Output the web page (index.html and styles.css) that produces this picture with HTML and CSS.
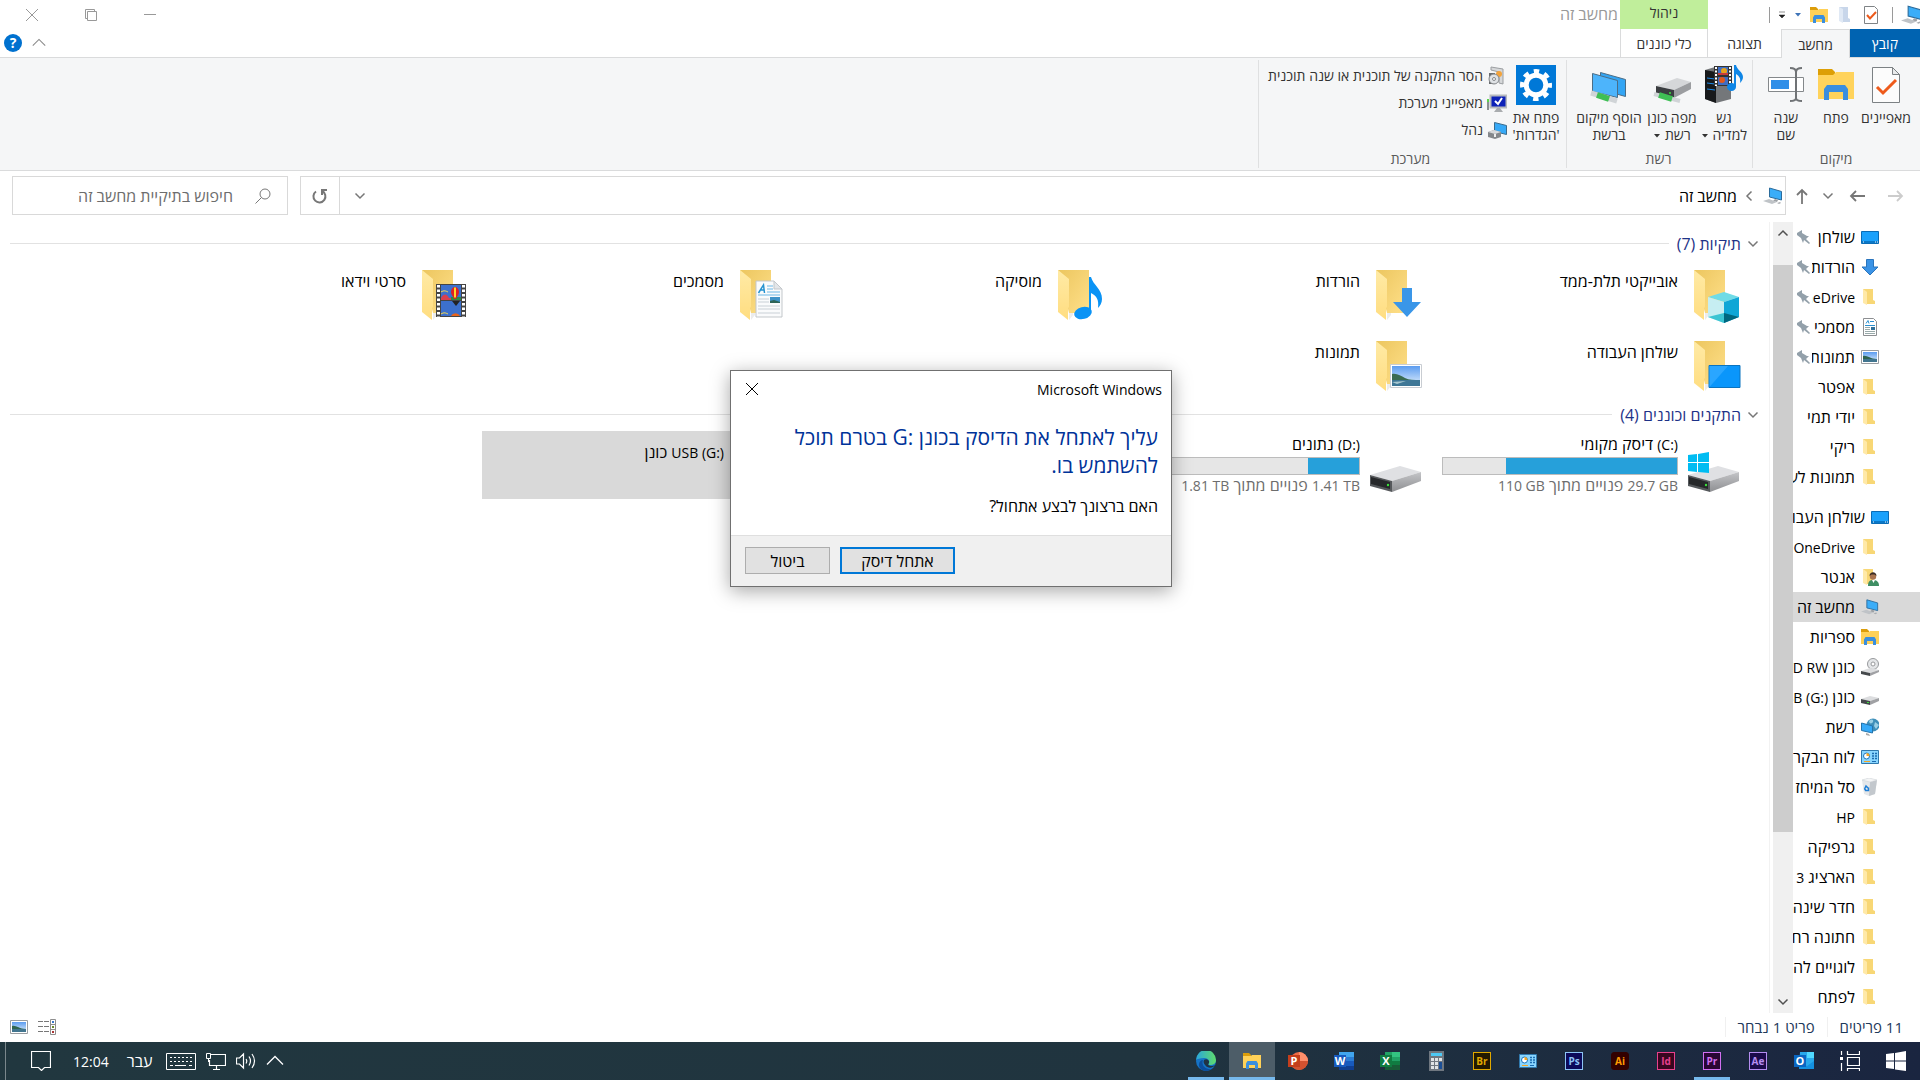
FILE: index.html
```html
<!DOCTYPE html>
<html lang="he" dir="rtl">
<head>
    <meta charset="UTF-8">
    <meta name="viewport" content="width=device-width, initial-scale=1.0">
    <title>מחשב זה</title>
    <link rel="stylesheet" href="styles.css">
</head>
<body>
    <svg class="sprite" aria-hidden="true">
        <defs>
            <linearGradient id="gBack" x1="0" y1="0" x2="1" y2="1"><stop offset="0" stop-color="#ecc65f"/><stop offset="1" stop-color="#ffe08a"/></linearGradient>
            <linearGradient id="gFlap" x1="0" y1="0" x2="0" y2="1"><stop offset="0" stop-color="#ffeaa5"/><stop offset="1" stop-color="#ffdd80"/></linearGradient>
            <linearGradient id="gSide" x1="0" y1="0" x2="0" y2="1"><stop offset="0" stop-color="#c4c5c8"/><stop offset="1" stop-color="#8e8f92"/></linearGradient>
            <linearGradient id="gSky" x1="0" y1="0" x2="0" y2="1"><stop offset="0" stop-color="#5b9cf0"/><stop offset="1" stop-color="#e4f1fc"/></linearGradient>
            <linearGradient id="gEdge" x1="0" y1="0" x2="1" y2="0"><stop offset="0" stop-color="#2aa6dd"/><stop offset="1" stop-color="#5fdc6b"/></linearGradient>
        </defs>
        <symbol id="big-folder" viewBox="-6 -1 56 56">
            <path d="M0 2h31v43H11z" fill="url(#gBack)"/>
            <path d="M11 45l4 0 0 2-4 5z" fill="#ececec"/>
            <path d="M0 2l11 9v28l-1 1v12L0 44z" fill="url(#gFlap)"/>
        </symbol>
        <symbol id="ov-cube" viewBox="-6 -1 56 56">
            <path d="M14 29l16-5 15 5-15 5z" fill="#6fdbe6"/>
            <path d="M14 29l16 5v21l-16-6z" fill="#c6eef2"/>
            <path d="M30 34l15-5v20l-15 6z" fill="#0fa6d6"/>
            <path d="M14 49l16-4v10z" fill="#3cc5d3"/>
            <path d="M30 45l15 4-15 6z" fill="#00677f"/>
        </symbol>
        <symbol id="ov-arrow" viewBox="-6 -1 56 56"><path d="M26 20h10v14h9L31 49 17 34h9z" fill="#3a96e8"/></symbol>
        <symbol id="ov-note" viewBox="-6 -1 56 56">
            <path d="M31 9h2c2 8 11 12 11 22 0 4-2 7-4 9 1-8-1-12-7-15v20h-2z" fill="#0a93f5"/>
            <ellipse cx="25" cy="45" rx="9" ry="6" transform="rotate(-15 25 45)" fill="#0a93f5"/>
        </symbol>
        <symbol id="ov-doc" viewBox="-6 -1 56 56">
            <path d="M16 13h18l8 8v28H16z" fill="#fafbfc" stroke="#c3c7cb"/>
            <path d="M34 13v8h8z" fill="#e3e6e9" stroke="#c3c7cb"/>
            <path d="M18.500 25l5-8 1 8M20.500 22h4" fill="none" stroke="#2492d0" stroke-width="1.500"/>
            <path d="M27 18h6M27 21h6M27 24h13M18 27h22" stroke="#6cb8e6"/>
            <path d="M18 31h11M18 34h11M18 38h22M18 41h22M18 45h22" stroke="#c9d0d6"/>
            <path d="M30 29h10v6H30z" fill="#3f93c8"/>
            <path d="M30 33l4-1 6 2v1H30z" fill="#2d6457"/>
        </symbol>
        <symbol id="ov-video" viewBox="-6 -1 56 56">
            <path d="M14 16h30v33H14z" fill="#444"/>
            <path d="M16.500 17v32M41.500 17v32" stroke="#fff" stroke-width="3" stroke-dasharray="2.500 2"/>
            <path d="M19 17h20v15H19zM19 33h20v15H19z" fill="#3c70cc"/>
            <path d="M19 30c3-5 6-4 8 0h12v2H19z" fill="#d8404f"/>
            <path d="M29 29h10v3H29z" fill="#2d8b45"/>
            <path d="M19 24c3-2 5-1 7 0" stroke="#ffe04a" fill="none"/>
            <path d="M29 24a4 5 0 0 1 8 0c0 3-2 4-3 7h-2c-1-3-3-4-3-7z" fill="#e02020"/>
            <path d="M32 19.500h2v10h-2z" fill="#ffd52e"/>
            <path d="M30 33h8l-4 5z" fill="#222"/>
            <path d="M29 48a5 5 0 0 1 9 0z" fill="#e8641c"/>
            <path d="M19 46c3-2 5-1 7 0" stroke="#ffe04a" fill="none"/>
        </symbol>
        <symbol id="ov-desktop" viewBox="-6 -1 56 56">
            <path d="M15 26.500h31v22H15z" fill="#0a96fb" stroke="#0b74c0"/>
            <path d="M15.500 48L34 27H15.500z" fill="#2aa6ff"/>
        </symbol>
        <symbol id="ov-picture" viewBox="-6 -1 56 56">
            <path d="M14.500 25.500h31v23h-31z" fill="#fff" stroke="#c9cdd2"/>
            <path d="M16 27h28v20H16z" fill="url(#gSky)"/>
            <path d="M16 35c5-1 9 2 13 4s9 2 15 2v1H16z" fill="#3a6b51"/>
            <path d="M16 41h28v6H16z" fill="#3e7796"/>
            <path d="M16 43l14-1-9 3z" fill="#a7c7d0"/>
        </symbol>
        <symbol id="big-drive" viewBox="-6 -1 56 56">
            <path d="M-6 36l30-9 21 6-29 9z" fill="#dfe0e3"/>
            <path d="M16 42l29-9v9l-29 11z" fill="url(#gSide)"/>
            <path d="M-6 36l22 6v11l-22-6z" fill="#55585b"/>
            <path d="M-5 38l19 5v7l-19-5z" fill="#26282a"/>
            <circle cx="12" cy="46" r="1.200" fill="#3be03b"/>
        </symbol>
        <symbol id="ov-win" viewBox="-6 -1 56 56"><path d="M-6 16l9-1v8h-9zM4 15l11-2v10H4zM-6 24h9v9l-9-1zM4 24h11v10l-11-1z" fill="#00bcf2"/></symbol>

        <symbol id="folder" viewBox="0 0 18 18">
            <path d="M2 1h10v11l2 1v3H5z" fill="#f8d775"/>
            <path d="M2 1l4 3v13l-4-2z" fill="#ffe9a8"/>
        </symbol>
        <symbol id="desktop" viewBox="0 0 18 18">
            <path d="M.5 3.500h17v12H.5z" fill="#1ba1fb" stroke="#0b6cb5"/>
            <path d="M1 13h16v2H1z" fill="#0a78c8"/>
            <path d="M2 14h1M14 14h1M16 14h1" stroke="#fff"/>
        </symbol>
        <symbol id="download" viewBox="0 0 18 18"><path d="M5.500 1.500h7V9H17l-8 8-8-8h4.500z" fill="#3a93e6" stroke="#2a75bd"/></symbol>
        <symbol id="document" viewBox="0 0 18 18">
            <path d="M2.500.5h10l3 3v14h-13z" fill="#fff" stroke="#8d8f92"/>
            <path d="M9 3.500h4M4 7.500h10M5 5.500l2-3 1 3" stroke="#2a8fd0" fill="none"/>
            <path d="M4 9.500h5M4 11.500h5M4 13.500h10M4 15.500h10" stroke="#9aa"/>
            <path d="M10 9h4v3h-4z" fill="#2f6f9a"/>
        </symbol>
        <symbol id="picture" viewBox="0 0 18 18">
            <path d="M.5 2.500h17v13H.5z" fill="#fff" stroke="#999da1"/>
            <path d="M2 4h14v10H2z" fill="url(#gSky)"/>
            <path d="M2 8c4-1 7 3 14 3v1H2z" fill="#2f6550"/>
            <path d="M2 11h14v3H2z" fill="#41758f"/>
        </symbol>
        <symbol id="user" viewBox="0 0 18 18">
            <path d="M2 1h10v11l2 1v3H5z" fill="#f8d775"/>
            <path d="M2 1l4 3v13l-4-2z" fill="#ffe9a8"/>
            <path d="M7 18c0-5 2-6 5-6s6 1 6 6z" fill="#3e8e63"/>
            <path d="M11 12h3l-1.500 3z" fill="#fff"/>
            <circle cx="12" cy="8.500" r="3.200" fill="#a9744f"/>
            <path d="M8.500 8c0-5 7-5 7 0l-2-1.500h-3z" fill="#3b2c25"/>
        </symbol>
        <symbol id="pc" viewBox="0 0 20 18">
            <path d="M6.500 1l12 3.500v8.500l-12-3z" fill="#3aadf8" stroke="#2c6c9c"/>
            <path d="M12 12l3 1-1 2-4-1z" fill="#9da1a5"/>
            <path d="M0 14l6-2 8 3-5 2z" fill="#bfc3c7"/>
            <path d="M14 16l3-1 1 1-2 1z" fill="#a9adb1"/>
        </symbol>
        <symbol id="explorer" viewBox="0 0 18 18">
            <path d="M0 1h6l2 2v3H0z" fill="#dc9d0a"/>
            <path d="M0 4h8l1-1h9v13H0z" fill="#ffd158"/>
            <path d="M3 17v-5.500L4.500 9h9l1.500 2.500V17h-3v-4H6v4z" fill="#3b8fde"/>
        </symbol>
        <symbol id="dvd" viewBox="0 0 18 18">
            <circle cx="12" cy="6" r="5.500" fill="#e4e6e8" stroke="#97999c"/>
            <circle cx="12" cy="6" r="2" fill="#fff" stroke="#97999c"/>
            <path d="M0 13l9-3 9 2-9 3z" fill="#dcdddf"/>
            <path d="M9 15l9-3v2l-9 4z" fill="#a0a1a4"/>
            <path d="M0 13l9 2v3l-9-2z" fill="#45484b"/>
        </symbol>
        <symbol id="drive" viewBox="0 0 18 18">
            <path d="M0 11l9-3 9 2-9 3z" fill="#dcdddf"/>
            <path d="M9 13l9-3v3l-9 4z" fill="#a0a1a4"/>
            <path d="M0 11l9 2v4l-9-2z" fill="#45484b"/>
            <path d="M6 14.500h2" stroke="#3be03b"/>
        </symbol>
        <symbol id="network" viewBox="0 0 18 18">
            <circle cx="12" cy="7" r="6.500" fill="#3f8fb9"/>
            <path d="M8 3c3-3 5-1 4 1s-4 2-4-1zM14 4l4 3-3 4-2-3z" fill="#9bd0e6"/>
            <path d="M.5 5l11 3v7l-11-2.500z" fill="#36aaf8" stroke="#2374ad"/>
            <path d="M5 15l3 1 1 2-4-1z" fill="#aaa"/>
        </symbol>
        <symbol id="control" viewBox="0 0 18 18">
            <path d="M.5 2.500h17v13H.5z" fill="#8ad6ff" stroke="#3079ad"/>
            <circle cx="5.500" cy="8" r="3" fill="#fff" stroke="#1b76bd"/>
            <path d="M5.500 8V5a3 3 0 0 1 3 3z" fill="#f5a623"/>
            <path d="M11 5.500h2M14 5.500h2M11 8h2M14 8h2M11 10.500h2M14 10.500h2" stroke="#1b6bb0" stroke-width="1.500"/>
            <path d="M3 13.500h6" stroke="#f5a623"/>
            <path d="M11 13.500h4" stroke="#1b6bb0"/>
        </symbol>
        <symbol id="bin" viewBox="0 0 18 18">
            <path d="M1 2l7-2 8 2-2 14-6 2-5-2z" fill="#e4e7ea"/>
            <path d="M9 4l7-2-2 14-6 2z" fill="#c3c8cd"/>
            <path d="M1 2l7-2 8 2-7 2z" fill="#f4f5f6" stroke="#cdd1d5" stroke-width=".5"/>
            <path d="M3.500 11l1.500-3 2 2M7.500 9.500l0 3H5M3.500 10.500l1.500 2.500" stroke="#1f7fd6" stroke-width="1.500" fill="none"/>
        </symbol>
        <symbol id="pin" viewBox="0 0 14 14"><path d="M1 3l5-3v3l5 3 2 0-3 3 4 4-1 1-5-4-1 3-2-5-4-3z" fill="#93a0aa"/></symbol>
        <symbol id="check-page" viewBox="0 0 18 18">
            <path d="M2.500.5h10l3 3v14h-13z" fill="#fff" stroke="#7f8386"/>
            <path d="M5 9l3 3.500 6-6.500" fill="none" stroke="#ec5a1c" stroke-width="2"/>
        </symbol>
        <symbol id="new-folder" viewBox="0 0 18 18">
            <path d="M3 1h9v11l2 1v3H6z" fill="#c8d6ea"/>
            <path d="M3 1l4 2v14l-4-2z" fill="#e0e9f5"/>
        </symbol>

        <symbol id="r-properties" viewBox="0 0 40 40">
            <path d="M6.500 2.500h20l7 7v28h-27z" fill="#fcfcfc" stroke="#7c8184"/>
            <path d="M26.500 2.500v7h7z" fill="#e9ebec" stroke="#7c8184"/>
            <path d="M11 22l6 6L30 15" fill="none" stroke="#ee5a1b" stroke-width="3"/>
        </symbol>
        <symbol id="r-open" viewBox="0 0 40 40">
            <path d="M2 4h14l3 3v5H2z" fill="#dd9f06"/>
            <path d="M2 10h15l3-3h18v27H2z" fill="#ffd35c"/>
            <path d="M8 35V24l3-4h18l3 4v11h-5v-8H13v8z" fill="#3a8edf"/>
        </symbol>
        <symbol id="r-rename" viewBox="0 0 40 40">
            <path d="M2.500 12.500h35v14h-35z" fill="#fff" stroke="#84888b"/>
            <path d="M5 15h18v9H5z" fill="#308fe8"/>
            <path d="M24 3c3 0 6 1 6 4v26c0 3 3 3 6 3M24 36c3 0 6 0 6-3M30 7c0-3 3-4 6-4" fill="none" stroke="#707376" stroke-width="2"/>
        </symbol>
        <symbol id="r-media" viewBox="0 0 40 40">
            <path d="M1 5l10-3 16 3v29l-15 4-11-4z" fill="#74777a"/>
            <path d="M1 5l11 2v31L1 34z" fill="#17191b"/>
            <path d="M3 13l8 1M3 18l8 1M3 24l8 1" stroke="#1e8ceb"/>
            <path d="M10 1h18v20H10z" fill="#333"/>
            <path d="M12 2v19M26 2v19" stroke="#fff" stroke-width="2" stroke-dasharray="2 1.500"/>
            <path d="M14 2h10v8H14zM14 12h10v8H14z" fill="#3d6dc4"/>
            <circle cx="20" cy="6" r="3" fill="#e7a11b"/>
            <path d="M14 8h10v2H14z" fill="#c83b3b"/>
            <circle cx="18" cy="15" r="3" fill="#e0571c"/>
            <path d="M30 0h2c1 5 7 7 7 12 0 2-1 4-3 6 1-5-1-7-4-9v13h-2z" fill="#0f86e6"/>
            <ellipse cx="27.500" cy="22" rx="4.500" ry="4" fill="#0f86e6"/>
        </symbol>
        <symbol id="r-mapdrive" viewBox="0 0 40 40">
            <path d="M4 21l21-8 14 4-17 8z" fill="#d5d7d9"/>
            <path d="M22 25l17-8v7l-17 9z" fill="#9b9da0"/>
            <path d="M4 21l18 4v8L4 29z" fill="#3a3d40"/>
            <circle cx="18" cy="28" r="1" fill="#3be03b"/>
            <path d="M2 29l26 7" stroke="#d0d4d7" stroke-width="4"/>
            <path d="M7 30l13 4" stroke="#3fbf55" stroke-width="6"/>
        </symbol>
        <symbol id="r-addplace" viewBox="0 0 40 40">
            <path d="M11.500 7.500l25 7v17l-25-7z" fill="#33a5f4" stroke="#4b6d86"/>
            <path d="M3.500 8.500l25 7v17l-25-6z" fill="#4db4fb" stroke="#4b6d86"/>
            <path d="M2 28l26 8" stroke="#d0d4d7" stroke-width="5"/>
            <path d="M8 30l12 4" stroke="#3fbf55" stroke-width="6"/>
        </symbol>
        <symbol id="r-settings" viewBox="0 0 40 40">
            <path d="M0 0h40v40H0z" fill="#0078d7"/>
            <circle cx="20" cy="20" r="13.500" fill="none" stroke="#fff" stroke-width="5" stroke-dasharray="5.300 5.303" stroke-dashoffset="2.600"/>
            <circle cx="20" cy="20" r="9.800" fill="none" stroke="#fff" stroke-width="5"/>
        </symbol>
        <symbol id="s-uninstall" viewBox="0 0 20 20">
            <path d="M4 1l12 2v15l-4-1V6L4 4z" fill="#d6d8da" stroke="#9b9ea1"/>
            <circle cx="12" cy="8" r="3" fill="#f2a33c"/>
            <path d="M2 7h6v11H2z" fill="#696c6f"/>
            <circle cx="7" cy="13" r="5" fill="#dfe2e5" stroke="#85888b"/>
            <circle cx="7" cy="13" r="1.500" fill="#fff" stroke="#85888b"/>
        </symbol>
        <symbol id="s-system" viewBox="0 0 20 20">
            <path d="M0 6h2v11H0z" fill="#8b8e90"/><path d="M0 6h2v3H0z" fill="#59d44b"/>
            <path d="M3.500 2.500h16v12h-16z" fill="#0d22b8" stroke="#b7babd" stroke-width="2"/>
            <path d="M8 8l3 3 4-6" fill="none" stroke="#fff" stroke-width="2"/>
            <path d="M10 15h3l3 4H7z" fill="#a9acaf"/>
        </symbol>
        <symbol id="s-manage" viewBox="0 0 20 20">
            <path d="M7.500 2.500l12 3v9l-12-3z" fill="#36a9f7" stroke="#3b6c8e"/>
            <path d="M1 12l6-2 7 2v5l-6 2-7-2z" fill="#85888b"/>
            <path d="M1 12l6-2 7 2-6 2z" fill="#d8dadc"/>
            <path d="M7 14h2v3H7z" fill="#eee"/>
        </symbol>

        <symbol id="chev-down" viewBox="0 0 12 12"><path d="M1.500 3.500L6 8l4.500-4.500" fill="none" stroke="currentColor" stroke-width="1.500"/></symbol>
        <symbol id="chev-up" viewBox="0 0 12 12"><path d="M1.500 8.500L6 4l4.500 4.500" fill="none" stroke="currentColor" stroke-width="1.500"/></symbol>
        <symbol id="chev-thin" viewBox="0 0 18 18"><path d="M1 12.500l8-8 8 8" fill="none" stroke="currentColor" stroke-width="1.300"/></symbol>
        <symbol id="cross" viewBox="0 0 12 12"><path d="M0 0l12 12M12 0L0 12" fill="none" stroke="currentColor"/></symbol>
        <symbol id="caret" viewBox="0 0 8 8"><path d="M1 2h6L4 5.500z" fill="currentColor"/></symbol>
        <symbol id="arrow-left" viewBox="0 0 16 16"><path d="M16 8H2M7 3L2 8l5 5" fill="none" stroke="currentColor" stroke-width="1.800"/></symbol>
    </svg>

    <div class="window">
        <header class="titlebar">
            <div class="quick">
                <svg class="quick-pc"><use href="#pc"/></svg>
                <span class="sep"></span>
                <svg class="icon"><use href="#check-page"/></svg>
                <svg class="icon"><use href="#new-folder"/></svg>
                <svg class="icon"><use href="#explorer"/></svg>
                <svg class="caret blue"><use href="#caret"/></svg>
                <svg class="caret" viewBox="0 0 8 8"><path d="M1 1h6M1 4h6L4 7z" fill="#222" stroke="#222" stroke-width=".5"/></svg>
                <span class="sep"></span>
            </div>
            <div class="context-tab">ניהול</div>
            <div class="window-title">מחשב זה</div>
            <div class="controls">
                <button aria-label="מזער"><svg viewBox="0 0 12 12"><path d="M0 5.500h12" stroke="currentColor"/></svg></button>
                <button aria-label="שחזר"><svg viewBox="0 0 12 12"><path d="M2.500 2.500h9v9h-9zM2.500 9.500h-2v-9h9v2" fill="none" stroke="currentColor"/></svg></button>
                <button aria-label="סגור"><svg><use href="#cross"/></svg></button>
            </div>
        </header>

        <nav class="tabs">
            <button class="tab tab-file">קובץ</button>
            <button class="tab tab-active">מחשב</button>
            <button class="tab tab-view">תצוגה</button>
            <button class="tab tab-tools">כלי כוננים</button>
            <div class="tabs-end">
                <svg class="collapse"><use href="#chev-thin"/></svg>
                <button class="help" aria-label="עזרה">?</button>
            </div>
        </nav>

        <section class="ribbon">
            <div class="group location">
                <div class="group-items">
                    <button class="big"><svg><use href="#r-properties"/></svg>מאפיינים</button>
                    <button class="big"><svg><use href="#r-open"/></svg>פתח</button>
                    <button class="big"><svg><use href="#r-rename"/></svg>שנה<br>שם</button>
                </div>
                <div class="group-name">מיקום</div>
            </div>
            <div class="group network">
                <div class="group-items">
                    <button class="big"><svg><use href="#r-media"/></svg>גש<br>למדיה <svg class="caret"><use href="#caret"/></svg></button>
                    <button class="big"><svg><use href="#r-mapdrive"/></svg>מפה כונן<br>רשת <svg class="caret"><use href="#caret"/></svg></button>
                    <button class="big wide"><svg><use href="#r-addplace"/></svg>הוסף מיקום<br>ברשת</button>
                </div>
                <div class="group-name">רשת</div>
            </div>
            <div class="group system">
                <div class="group-items">
                    <button class="big"><svg><use href="#r-settings"/></svg>פתח את<br>'הגדרות'</button>
                    <div class="small-list">
                        <button class="small"><svg><use href="#s-uninstall"/></svg>הסר התקנה של תוכנית או שנה תוכנית</button>
                        <button class="small"><svg><use href="#s-system"/></svg>מאפייני מערכת</button>
                        <button class="small"><svg><use href="#s-manage"/></svg>נהל</button>
                    </div>
                </div>
                <div class="group-name">מערכת</div>
            </div>
        </section>

        <div class="navbar">
            <button class="nav-forward" aria-label="קדימה"><svg class="flip"><use href="#arrow-left"/></svg></button>
            <button class="nav-back" aria-label="אחורה"><svg><use href="#arrow-left"/></svg></button>
            <button class="nav-recent" aria-label="מיקומים אחרונים"><svg class="chev"><use href="#chev-down"/></svg></button>
            <button class="nav-up" aria-label="למעלה"><svg class="turn-up"><use href="#arrow-left"/></svg></button>
            <div class="address">
                <svg class="address-pc"><use href="#pc"/></svg>
                <svg class="chev turn-right"><use href="#chev-down"/></svg>
                <a href="#">מחשב זה</a>
                <button class="address-drop" aria-label="מיקומים קודמים"><svg class="chev"><use href="#chev-down"/></svg></button>
                <button class="refresh" aria-label="רענן"><svg viewBox="0 0 16 16"><path d="M4 3.500a6 6 0 1 0 6-.5M10 7V2h5" fill="none" stroke="currentColor" stroke-width="2"/></svg></button>
            </div>
            <label class="search">
                <svg viewBox="0 0 16 16"><circle cx="10" cy="6" r="5" fill="none" stroke="currentColor"/><path d="M6.500 9.500L.5 15.500" stroke="currentColor"/></svg>
                <input type="text" placeholder="חיפוש בתיקיית מחשב זה" aria-label="חיפוש">
            </label>
        </div>

        <div class="body">
            <nav class="sidebar">
                <a href="#"><svg><use href="#desktop"/></svg><span>שולחן</span><svg class="pin"><use href="#pin"/></svg></a>
                <a href="#"><svg><use href="#download"/></svg><span>הורדות</span><svg class="pin"><use href="#pin"/></svg></a>
                <a href="#"><svg><use href="#folder"/></svg><span class="latin">OneDrive</span><svg class="pin"><use href="#pin"/></svg></a>
                <a href="#"><svg><use href="#document"/></svg><span>מסמכי</span><svg class="pin"><use href="#pin"/></svg></a>
                <a href="#"><svg><use href="#picture"/></svg><span>תמונות</span><svg class="pin"><use href="#pin"/></svg></a>
                <a href="#"><svg><use href="#folder"/></svg><span>אפטר</span></a>
                <a href="#"><svg><use href="#folder"/></svg><span>יודי תמי</span></a>
                <a href="#"><svg><use href="#folder"/></svg><span>ריקי</span></a>
                <a href="#"><svg><use href="#folder"/></svg><span>תמונות לע</span></a>
                <a href="#" class="root"><svg><use href="#desktop"/></svg><span>שולחן העבו</span></a>
                <a href="#"><svg><use href="#folder"/></svg><span class="latin">OneDrive</span></a>
                <a href="#"><svg><use href="#user"/></svg><span>אנטר</span></a>
                <a href="#" class="current"><svg><use href="#pc"/></svg><span>מחשב זה</span></a>
                <a href="#"><svg><use href="#explorer"/></svg><span>ספריות</span></a>
                <a href="#"><svg><use href="#dvd"/></svg><span>כונן <bdi class="latin">DVD RW</bdi></span></a>
                <a href="#"><svg><use href="#drive"/></svg><span>כונן <bdi class="latin">USB (G:)</bdi></span></a>
                <a href="#"><svg><use href="#network"/></svg><span>רשת</span></a>
                <a href="#"><svg><use href="#control"/></svg><span>לוח הבקר</span></a>
                <a href="#"><svg><use href="#bin"/></svg><span>סל המיחז</span></a>
                <a href="#"><svg><use href="#folder"/></svg><span class="latin">HP</span></a>
                <a href="#"><svg><use href="#folder"/></svg><span>גרפיקה</span></a>
                <a href="#"><svg><use href="#folder"/></svg><span>הארציג <bdi class="latin">3</bdi></span></a>
                <a href="#"><svg><use href="#folder"/></svg><span>חדר שינה</span></a>
                <a href="#"><svg><use href="#folder"/></svg><span>חתונה רח</span></a>
                <a href="#"><svg><use href="#folder"/></svg><span>לוגויים לה</span></a>
                <a href="#"><svg><use href="#folder"/></svg><span>לפתח</span></a>
            </nav>
            <div class="scrollbar">
                <div class="scroll-up"><svg><use href="#chev-up"/></svg></div>
                <div class="thumb"></div>
                <div class="scroll-down"><svg><use href="#chev-down"/></svg></div>
            </div>
            <main class="content">
                <h2><svg><use href="#chev-down"/></svg>תיקיות (7)</h2>
                <div class="tiles">
                    <div class="tile"><svg><use href="#big-folder"/><use href="#ov-cube"/></svg><div class="info">אובייקטי תלת-ממד</div></div>
                    <div class="tile"><svg><use href="#big-folder"/><use href="#ov-arrow"/></svg><div class="info">הורדות</div></div>
                    <div class="tile"><svg><use href="#big-folder"/><use href="#ov-note"/></svg><div class="info">מוסיקה</div></div>
                    <div class="tile"><svg><use href="#big-folder"/><use href="#ov-doc"/></svg><div class="info">מסמכים</div></div>
                    <div class="tile"><svg><use href="#big-folder"/><use href="#ov-video"/></svg><div class="info">סרטי וידאו</div></div>
                    <div class="tile"><svg><use href="#big-folder"/><use href="#ov-desktop"/></svg><div class="info">שולחן העבודה</div></div>
                    <div class="tile"><svg><use href="#big-folder"/><use href="#ov-picture"/></svg><div class="info">תמונות</div></div>
                </div>
                <h2><svg><use href="#chev-down"/></svg>התקנים וכוננים (4)</h2>
                <div class="tiles">
                    <div class="tile drive">
                        <svg><use href="#big-drive"/><use href="#ov-win"/></svg>
                        <div class="info">
                            <div dir="ltr" class="drive-name">דיסק מקומי <span class="latin">(C:)</span></div>
                            <div class="bar"><div class="bar-fill" style="width: 73%"></div></div>
                            <div class="space"><bdi class="latin">29.7 GB</bdi> פנויים מתוך <bdi class="latin">110 GB</bdi></div>
                        </div>
                    </div>
                    <div class="tile drive">
                        <svg><use href="#big-drive"/></svg>
                        <div class="info">
                            <div dir="ltr" class="drive-name">נתונים <span class="latin">(D:)</span></div>
                            <div class="bar"><div class="bar-fill" style="width: 22%"></div></div>
                            <div class="space"><bdi class="latin">1.41 TB</bdi> פנויים מתוך <bdi class="latin">1.81 TB</bdi></div>
                        </div>
                    </div>
                    <div class="tile"></div>
                    <div class="tile selected">
                        <svg><use href="#big-drive"/></svg>
                        <div class="info drive-name" dir="ltr">כונן <span class="latin">USB (G:)</span></div>
                    </div>
                </div>
            </main>
        </div>

        <footer class="status">
            <span>11 פריטים</span>
            <span>פריט 1 נבחר</span>
            <div class="views">
                <svg viewBox="0 0 18 18"><path d="M0 3.500h5M6 3.500h5M0 8.500h5M6 8.500h5M0 13.500h5M6 13.500h5" stroke="#777"/><path d="M12.500 1.500h5v15h-5zM12.500 6.500h5M12.500 11.500h5" fill="none" stroke="#8e8e8e"/><path d="M14 3h2v2h-2z" fill="#3a78c8"/><path d="M14 8h2v2h-2z" fill="#6a8a2a"/><path d="M14 13h2v2h-2z" fill="#a33"/></svg>
                <svg><use href="#picture"/></svg>
            </div>
        </footer>
    </div>

    <div class="dialog" role="dialog" aria-labelledby="dialog-title">
        <div class="dialog-top">
            <span id="dialog-title" class="latin">Microsoft Windows</span>
            <button class="dialog-close" aria-label="סגור"><svg><use href="#cross"/></svg></button>
        </div>
        <div class="dialog-body">
            <h1>עליך לאתחל את הדיסק בכונן <bdi dir="ltr">G:</bdi> בטרם תוכל להשתמש בו.</h1>
            <p>האם ברצונך לבצע אתחול?</p>
        </div>
        <div class="dialog-buttons">
            <button class="primary">אתחל דיסק</button>
            <button>ביטול</button>
        </div>
    </div>

    <div class="taskbar">
        <div class="apps">
            <button class="app" aria-label="התחל"><svg viewBox="0 0 20 20"><path d="M0 3l8-1v7.500H0zM9 2l11-2v9.500H9zM0 10.500h8V18l-8-1zM9 10.500h11V20L9 18.500z" fill="#fff"/></svg></button>
            <button class="app" aria-label="תצוגת משימות"><svg viewBox="0 0 20 20"><path d="M1.500 0v4M1.500 12v8M7.500 0v3.500h12V0M7.500 6.500h12v8h-12zM7.500 20v-2.500h12V20" fill="none" stroke="#fff" stroke-width="1.200"/><path d="M0 6h3v3H0z" fill="#fff"/></svg></button>
            <button class="app" aria-label="Outlook"><svg viewBox="0 0 20 20"><path d="M6 1h14v17H5z" fill="#28a8ea"/><path d="M13 1h7v6h-7z" fill="#50d9ff"/><path d="M5 11l8 4 7-5v8H5z" fill="#1490df"/><path d="M0 4h12v12H0z" fill="#0a66c2"/><text x="6" y="14" class="letter">O</text></svg></button>
            <button class="app"><span class="adobe ae">Ae</span></button>
            <button class="app running"><span class="adobe pr">Pr</span></button>
            <button class="app"><span class="adobe id">Id</span></button>
            <button class="app"><span class="adobe ai">Ai</span></button>
            <button class="app"><span class="adobe ps">Ps</span></button>
            <button class="app" aria-label="לוח הבקרה"><svg class="small-app"><use href="#control"/></svg></button>
            <button class="app"><span class="adobe br">Br</span></button>
            <button class="app" aria-label="מחשבון"><svg viewBox="0 0 20 20"><path d="M3 0h15v20H3z" fill="#6f7780"/><path d="M5 2h11v3H5z" fill="#4cc9f5"/><path d="M5 7h3v3H5zM9 7h3v3H9zM13 7h3v3h-3zM5 11h3v3H5zM9 11h3v3H9zM5 15h3v3H5zM9 15h3v3H9z" fill="#dfe3e6"/><path d="M13 11h3v7h-3z" fill="#1c4f96"/></svg></button>
            <button class="app" aria-label="Excel"><svg viewBox="0 0 20 20"><path d="M5 1h15v18H5z" fill="#21a366"/><path d="M12 1h8v5h-8z" fill="#33c481"/><path d="M5 10h15v9H5z" fill="#185c37"/><path d="M12 10h8v4h-8z" fill="#107c41"/><path d="M0 4h12v12H0z" fill="#107c41"/><text x="6" y="14" class="letter">X</text></svg></button>
            <button class="app" aria-label="Word"><svg viewBox="0 0 20 20"><path d="M5 1h15v5H5z" fill="#41a5ee"/><path d="M5 6h15v4H5z" fill="#2b7cd3"/><path d="M5 10h15v5H5z" fill="#185abd"/><path d="M5 15h15v4H5z" fill="#103f91"/><path d="M0 4h12v12H0z" fill="#185abd"/><text x="6" y="14" class="letter">W</text></svg></button>
            <button class="app" aria-label="PowerPoint"><svg viewBox="0 0 20 20"><circle cx="11" cy="10" r="9" fill="#ed6c47"/><path d="M11 1a9 9 0 0 1 9 9h-9z" fill="#ff8f6b"/><path d="M2 10h18a9 9 0 0 1-18 0z" fill="#d35230"/><path d="M0 4h12v12H0z" fill="#c43e1c"/><text x="6" y="14" class="letter">P</text></svg></button>
            <button class="app active" aria-label="סייר הקבצים"><svg class="small-app"><use href="#explorer"/></svg></button>
            <button class="app running" aria-label="Edge"><svg viewBox="0 0 20 20"><circle cx="10" cy="10" r="10" fill="#1573c6"/><path d="M0 9a10 10 0 0 1 20 0c0 4-3 5-6 5-2 0-2-1-1-2 1-3-2-5-5-5-4 0-7 1-8 2z" fill="url(#gEdge)"/><path d="M7 9c-2 5 2 10 9 9-8 5-14-1-13-5 0-2 2-4 4-4z" fill="#0c4e9c"/><path d="M8 9c2-2 6 0 5 3-2 2 0 3 3 3 2 0 3-1 3.500-1.500-2 4-8 4-10 1C8 13 7 11 8 9z" fill="#203444"/></svg></button>
        </div>
        <div class="tray">
            <svg class="tray-chev"><use href="#chev-thin"/></svg>
            <svg class="tray-sound" viewBox="0 0 20 20"><path d="M.5 7h3L7.500 3v14l-4-4h-3zM10 8q1.500 2 0 4.500M13 5.500q3 4.500 0 9M16 3q5 7 0 14" fill="none" stroke="#fff" stroke-width="1.200"/></svg>
            <svg class="tray-net" viewBox="0 0 20 20"><path d="M5 3.500h14.500v11h-16V9M10.500 15v3M7 18.500h7" fill="none" stroke="#fff" stroke-width="1.200"/><path d="M.5 2.500h4v5h-4zM2.500 8v3" fill="none" stroke="#fff"/></svg>
            <svg class="tray-keys" viewBox="0 0 30 18"><path d="M.5 1.500h29v16H.5z" fill="none" stroke="#fff"/><path d="M4 5.500h22M4 9.500h22" stroke="#fff" stroke-dasharray="2 2"/><path d="M4 13.500h3M9 13.500h11M23 13.500h3" stroke="#fff"/></svg>
            <span class="lang">עבר</span>
            <span class="clock">12:04</span>
            <svg class="tray-note" viewBox="0 0 20 20"><path d="M.5.5h19v16h-6l-3 3-3-3h-7z" fill="none" stroke="#fff" stroke-width="1.200"/></svg>
        </div>
    </div>
</body>
</html>
```
FILE: styles.css
```css
* {
    box-sizing: border-box;
}
body {
    margin: 0;
    height: 100vh;
    display: flex;
    flex-direction: column;
    overflow: hidden;
    background: #fff;
    color: #000;
    font-family: "Open Sans", "Liberation Sans", sans-serif;
    font-size: 16px;
}
button, input {
    font: inherit;
    color: inherit;
    border: none;
    background: none;
    padding: 0;
    margin: 0;
}
a {
    color: inherit;
    text-decoration: none;
}
svg {
    flex: none;
}
.latin {
    font-size: 14px;
}
.sprite {
    position: absolute;
    width: 0;
    height: 0;
}
.window {
    flex: 1;
    min-height: 0;
    display: flex;
    flex-direction: column;
}

/* title bar */
.titlebar {
    display: flex;
    height: 29px;
    flex: none;
}
.quick {
    width: 212px;
    display: flex;
    align-items: center;
    gap: 8px;
    overflow: hidden;
}
.quick-pc {
    width: 22px;
    height: 20px;
    margin-right: -3px;
}
.sep {
    width: 1px;
    height: 16px;
    margin-left: 4px;
    background: #9a9a9a;
}
.icon {
    width: 18px;
    height: 18px;
}
.caret {
    width: 8px;
    height: 8px;
}
.caret.blue {
    color: #3f74b8;
}
.context-tab {
    width: 88px;
    background: #c0ee9b;
    color: #333;
    font-size: 14px;
    line-height: 26px;
    text-align: center;
}
.window-title {
    flex: 1;
    padding-right: 2px;
    line-height: 29px;
    color: #999;
}
.controls {
    display: flex;
    padding-left: 2px;
}
.controls button {
    width: 59px;
    color: #999;
}
.controls svg {
    width: 12px;
    height: 12px;
    display: block;
    margin: 0 auto;
}

/* ribbon tabs */
.tabs {
    display: flex;
    height: 29px;
    flex: none;
    border-bottom: 1px solid #dadbdc;
    font-size: 14px;
    color: #333;
}
.tab-file {
    width: 70px;
    background: #0063b1;
    color: #fff;
}
.tab-active {
    width: 69px;
    margin-bottom: -1px;
    background: #f5f6f7;
    border: 1px solid #dadbdc;
    border-bottom: none;
}
.tab-view {
    width: 73px;
}
.tab-tools {
    width: 88px;
    border: solid #dadbdc;
    border-width: 0 1px;
}
.tabs-end {
    flex: 1;
    display: flex;
    justify-content: flex-end;
    align-items: center;
    gap: 10px;
    padding-left: 4px;
}
.collapse {
    width: 14px;
    height: 14px;
    color: #888;
}
.help {
    width: 18px;
    height: 18px;
    border-radius: 50%;
    background: #0071cf;
    color: #fff;
    font-weight: bold;
    line-height: 18px;
}

/* ribbon */
.ribbon {
    display: flex;
    height: 113px;
    flex: none;
    padding: 2px 0;
    background: #f5f6f7;
    border-bottom: 1px solid #dadbdc;
    font-size: 14px;
    color: #333;
}
.group {
    display: flex;
    flex-direction: column;
    justify-content: space-between;
    border-left: 1px solid #dfe0e1;
}
.location {
    width: 168px;
    padding: 0 9px 0 8px;
}
.network {
    width: 186px;
    padding-right: 2px;
}
.system {
    width: 308px;
    padding-right: 4px;
}
.group-items {
    display: flex;
}
.group-name {
    text-align: center;
    line-height: 18px;
    color: #5a5a5a;
}
.big {
    flex: 0 0 52px;
    display: block;
    padding-top: 5px;
    line-height: 17px;
    white-space: nowrap;
    align-self: flex-start;
}
.location .big {
    flex-basis: 50px;
}
.big.wide {
    flex-basis: 74px;
}
.big > svg:first-child {
    display: block;
    width: 40px;
    height: 40px;
    margin: 0 auto 4px;
}
.small-list {
    display: flex;
    flex-direction: column;
    padding: 2px 3px 0 0;
}
.small {
    display: flex;
    align-items: center;
    gap: 4px;
    height: 27px;
    white-space: nowrap;
}
.small svg {
    width: 20px;
    height: 20px;
}

/* address row */
.navbar {
    display: flex;
    height: 51px;
    flex: none;
    padding: 5px 4px 7px 12px;
    color: #777;
}
.navbar svg {
    width: 16px;
    height: 16px;
    display: block;
    margin: 0 auto;
}
.navbar svg.chev {
    width: 12px;
    height: 12px;
}
.nav-forward {
    width: 40px;
    color: #ccc;
}
.nav-back {
    width: 38px;
}
.nav-recent {
    width: 20px;
}
.nav-up {
    width: 32px;
}
.flip {
    transform: scaleX(-1);
}
.turn-up, .turn-right {
    transform: rotate(90deg);
}
.address {
    flex: 1;
    display: flex;
    align-items: center;
    border: 1px solid #d9d9d9;
}
.navbar .address-pc {
    width: 20px;
    height: 18px;
    margin: 0 2px 0 8px;
}
.address .turn-right {
    margin: 0 0 0 6px;
}
.address a {
    flex: 1;
    color: #000;
}
.address-drop {
    width: 40px;
}
.refresh {
    width: 39px;
    align-self: stretch;
    border-right: 1px solid #d9d9d9;
}
.search {
    width: 276px;
    display: flex;
    align-items: center;
    gap: 22px;
    margin-right: 12px;
    padding-right: 16px;
    border: 1px solid #d9d9d9;
}
.navbar .search svg {
    margin: 0;
}
.search input {
    flex: 1;
    min-width: 0;
    outline: none;
}
.search input::placeholder {
    color: #6d6d6d;
    opacity: 1;
}

/* navigation pane */
.body {
    flex: 1;
    min-height: 0;
    display: flex;
}
.sidebar {
    width: 127px;
    flex: none;
    overflow: hidden;
}
.sidebar a {
    display: flex;
    align-items: center;
    gap: 6px;
    height: 30px;
    padding-right: 41px;
    white-space: nowrap;
}
.sidebar a.root {
    margin-top: 10px;
    padding-right: 31px;
}
.sidebar a.current {
    background: #d9d9d9;
}
.sidebar svg {
    width: 18px;
    height: 18px;
}
.sidebar span {
    flex: 1;
    min-width: 0;
    overflow: hidden;
}
.sidebar .pin {
    width: 14px;
    height: 14px;
    margin: 0 -4px 0 3px;
}
.scrollbar {
    width: 20px;
    flex: none;
    display: flex;
    flex-direction: column;
    background: #f0f0f0;
    color: #505050;
}
.scrollbar svg {
    width: 12px;
    height: 12px;
    display: block;
    margin: 5px auto;
}
.scroll-up {
    height: 43px;
}
.thumb {
    flex: 567;
    background: #cdcdcd;
}
.scroll-down {
    flex: 181;
    display: flex;
    align-items: flex-end;
}

/* files */
.content {
    flex: 1;
    margin-right: 3px;
    padding: 6px 15px 0 10px;
    border-right: 1px solid #f2f2f2;
}
h2 {
    display: flex;
    align-items: center;
    gap: 6px;
    height: 32px;
    margin: 0 -5px 0 0;
    padding-bottom: 1px;
    font-size: 16px;
    font-weight: normal;
    color: #1e3287;
}
h2 svg {
    width: 12px;
    height: 12px;
    color: #777;
}
h2::after {
    content: "";
    flex: 1;
    height: 1px;
    margin-right: 2px;
    background: #e2e2e2;
}
.tiles {
    display: grid;
    grid-template-columns: repeat(auto-fill, 318px);
    grid-auto-rows: 68px;
    row-gap: 3px;
}
.tile {
    display: flex;
    gap: 10px;
    padding: 7px 10px 0 6px;
}
.tile.selected {
    background: #d9d9d9;
}
.tile svg {
    width: 56px;
    height: 56px;
}
.info {
    flex: 1;
    padding-top: 4px;
    line-height: 20px;
}
.drive .info {
    padding-top: 0;
    margin-top: -4px;
}
.drive-name {
    text-align: right;
}
.bar {
    height: 18px;
    margin: 2px 0 0;
    background: #e6e6e6;
    border: 1px solid #bcbcbc;
}
.bar-fill {
    height: 100%;
    background: #26a0da;
}
.space {
    color: #6d6d6d;
}

/* status bar */
.status {
    display: flex;
    align-items: center;
    height: 29px;
    flex: none;
    padding: 0 5px 2px 10px;
    font-size: 15px;
    color: #1e395b;
}
.status span {
    padding: 0 12px;
    border-left: 1px solid #f0f0f0;
}
.views {
    flex: 1;
    display: flex;
    justify-content: flex-end;
    gap: 10px;
}
.views svg {
    width: 18px;
    height: 18px;
}

/* message box */
.dialog {
    position: absolute;
    left: 730px;
    top: 370px;
    width: 442px;
    background: #fff;
    border: 1px solid #707070;
    box-shadow: 0 4px 18px rgba(0, 0, 0, 0.35);
}
.dialog-top {
    display: flex;
    justify-content: space-between;
    align-items: center;
    height: 36px;
    padding: 0 9px 0 15px;
}
.dialog-close svg {
    width: 12px;
    height: 12px;
    display: block;
}
.dialog-body {
    padding: 16px 13px 18px;
}
h1 {
    margin: 0;
    font-size: 21px;
    font-weight: normal;
    line-height: 28px;
    color: #003399;
}
.dialog-body p {
    margin: 16px 0 0;
    line-height: 22px;
}
.dialog-buttons {
    display: flex;
    justify-content: flex-end;
    gap: 10px;
    padding: 11px 14px 12px;
    background: #f0f0f0;
    border-top: 1px solid #dfdfdf;
}
.dialog-buttons button {
    width: 85px;
    height: 27px;
    line-height: 20px;
    background: #e1e1e1;
    border: 1px solid #adadad;
}
.dialog-buttons .primary {
    width: 115px;
    border: 2px solid #0078d7;
}

/* taskbar */
.taskbar {
    display: flex;
    justify-content: space-between;
    height: 38px;
    flex: none;
    background: linear-gradient(90deg, #21373f 0%, #20343f 60%, #1a2540 100%);
    color: #fff;
}
.apps {
    display: flex;
    padding-right: 1px;
}
.app {
    width: 46px;
    display: flex;
    align-items: center;
    justify-content: center;
    position: relative;
}
.app svg {
    width: 20px;
    height: 20px;
}
.app .small-app {
    width: 18px;
    height: 18px;
}
.app.active {
    background: #4d5d68;
}
.app.active::after, .app.running::after {
    content: "";
    position: absolute;
    bottom: 0;
    left: 5px;
    right: 5px;
    height: 3px;
    background: #76b9ed;
}
.app.active::after {
    left: 0;
    right: 0;
}
.letter {
    font-size: 11px;
    font-weight: bold;
    fill: #fff;
    text-anchor: middle;
}
.adobe {
    width: 18px;
    height: 18px;
    border: 1px solid;
    font-size: 10px;
    font-weight: bold;
    line-height: 16px;
    text-align: center;
}
.ae { color: #b48cf0; background: #1b0a4a; }
.pr { color: #d070f0; background: #2a0634; }
.id { color: #e8408c; background: #3a0620; }
.ai { color: #ff9a00; background: #330000; border-color: #330000; border-radius: 3px; }
.ps { color: #8cc4f5; background: #0c0a5a; }
.br { color: #e0a800; background: #241a00; }
.tray {
    display: flex;
    align-items: center;
    padding-left: 31px;
    position: relative;
}
.tray::after {
    content: "";
    position: absolute;
    left: 5px;
    top: 0;
    bottom: 0;
    width: 1px;
    background: #7a878c;
}
.tray svg {
    width: 20px;
    height: 20px;
    margin-left: 10px;
}
.tray .tray-chev {
    width: 18px;
    height: 18px;
}
.tray .tray-keys {
    width: 30px;
    height: 18px;
    margin-left: 14px;
}
.lang {
    margin-left: 18px;
}
.clock {
    margin-left: 22px;
    font-size: 14px;
}
.tray .tray-note {
    margin-left: 0;
}
```
